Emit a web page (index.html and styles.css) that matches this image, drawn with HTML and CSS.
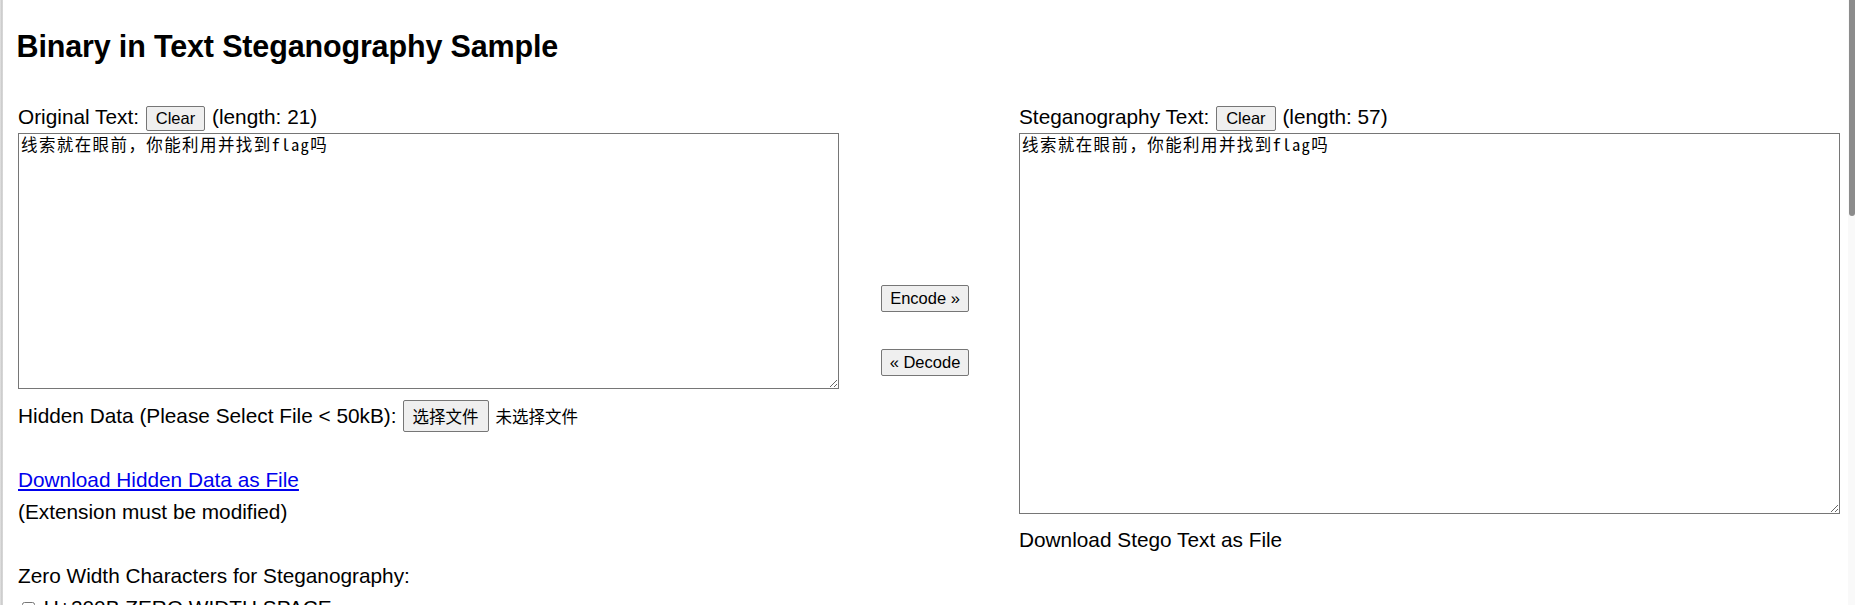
FILE: index.html
```html
<!DOCTYPE html>
<html lang="en">
<head>
<meta charset="utf-8">
<title>Binary in Text Steganography Sample</title>
<link rel="stylesheet" href="styles.css">
</head>
<body>
<div class="page">
  <h1 class="title">Binary in Text Steganography Sample</h1>
  <div class="columns">
    <div class="col col-left">
      <div class="label-row">Original Text: <button class="btn btn-clear" type="button">Clear</button> (length: 21)</div>
      <textarea class="text text-orig">线索就在眼前，你能利用并找到flag吗</textarea>
      <div class="file-row">
        <span class="file-label">Hidden Data (Please Select File &lt; 50kB):</span>
        <button class="file-btn" type="button">选择文件</button>
        <span class="file-none">未选择文件</span>
      </div>
      <div class="line"></div>
      <div class="line"><a class="dl-link" href="#">Download Hidden Data as File</a></div>
      <div class="line">(Extension must be modified)</div>
      <div class="line"></div>
      <div class="line">Zero Width Characters for Steganography:</div>
      <label class="line check"><input type="checkbox"> U+200B ZERO WIDTH SPACE</label>
    </div>
    <div class="col col-mid">
      <button class="btn" type="button">Encode &raquo;</button>
      <button class="btn" type="button">&laquo; Decode</button>
    </div>
    <div class="col col-right">
      <div class="label-row">Steganography Text: <button class="btn btn-clear" type="button">Clear</button> (length: 57)</div>
      <textarea class="text text-stego">线索就在眼前，你能利用并找到flag吗</textarea>
      <div class="line stego-dl">Download Stego Text as File</div>
    </div>
  </div>
</div>
<div class="edge-left"></div>
<div class="scrollbar"><div class="scrollbar-thumb"></div></div>
</body>
</html>
```
FILE: styles.css
```css
html {
  overflow: hidden;
}

body {
  margin: 0;
  font-family: "Liberation Sans", "Noto Sans CJK SC", sans-serif;
  font-size: 20.8px;
  color: #000;
  background: #fff;
}

.page {
  padding-left: 18px;
}

.title {
  margin: 29px 0 0 -1.5px;
  font-size: 30.5px;
  line-height: 35px;
  font-weight: bold;
  letter-spacing: -0.15px;
}

.columns {
  display: flex;
  align-items: flex-start;
  margin-top: 41px;
}

.col-left,
.col-right {
  width: 821px;
  flex: none;
}

.col-mid {
  width: 172px;
  padding-right: 8px;
  padding-top: 180px;
  flex: none;
  display: flex;
  flex-direction: column;
  align-items: center;
  gap: 37px;
}

.label-row {
  height: 27.5px;
  line-height: normal;
  white-space: nowrap;
}

.btn {
  font-family: "Liberation Sans", sans-serif;
  font-size: 16.5px;
  line-height: 19px;
  padding: 3px 8px;
  margin: 0;
  border: 1px solid #767676;
  border-radius: 2px;
  background: #efefef;
  color: #000;
}

.btn-clear {
  padding: 2px 9px;
  margin: 0 1px;
}

.text {
  display: block;
  box-sizing: border-box;
  width: 821px;
  margin: 0;
  padding: 2px;
  border: 1px solid #767676;
  border-radius: 0;
  font-family: "Noto Sans Mono CJK SC", "Noto Sans CJK SC", monospace;
  font-size: 16.5px;
  letter-spacing: 1.4px;
  line-height: 1;
  color: #000;
  background: #fff;
  outline: none;
}

.text-orig {
  height: 256px;
}

.text-stego {
  height: 381px;
}

.file-row {
  display: flex;
  align-items: center;
  height: 32px;
  margin-top: 11px;
  white-space: nowrap;
}

.file-btn {
  box-sizing: border-box;
  height: 32px;
  margin: 0 0 0 6px;
  padding: 0 9px;
  border: 1px solid #767676;
  border-radius: 2px;
  background: #efefef;
  color: #000;
  font-family: "Noto Sans CJK SC", sans-serif;
  font-size: 16.5px;
  line-height: 30px;
}

.file-none {
  margin-left: 7px;
  font-family: "Noto Sans CJK SC", sans-serif;
  font-size: 16.5px;
}

.line {
  display: block;
  height: 32px;
  line-height: 32px;
  white-space: nowrap;
}

.dl-link {
  color: #0000ee;
  text-decoration: underline;
}

.check input {
  width: 13px;
  height: 13px;
  margin: 3px 3px 3px 4px;
}

.stego-dl {
  margin-top: 10px;
}

.edge-left {
  position: fixed;
  left: 0;
  top: 0;
  bottom: 0;
  width: 3px;
  background: linear-gradient(to right, #e4e4e4, #c9c9c9 60%, #dfdfdf);
}

.scrollbar {
  position: fixed;
  right: 0;
  top: 0;
  bottom: 0;
  width: 7px;
  background: #f9f9f9;
}

.scrollbar-thumb {
  position: absolute;
  top: 0;
  right: 0;
  width: 6px;
  height: 216px;
  background: #8c8c8c;
  border-radius: 0 0 3px 3px;
}
```
